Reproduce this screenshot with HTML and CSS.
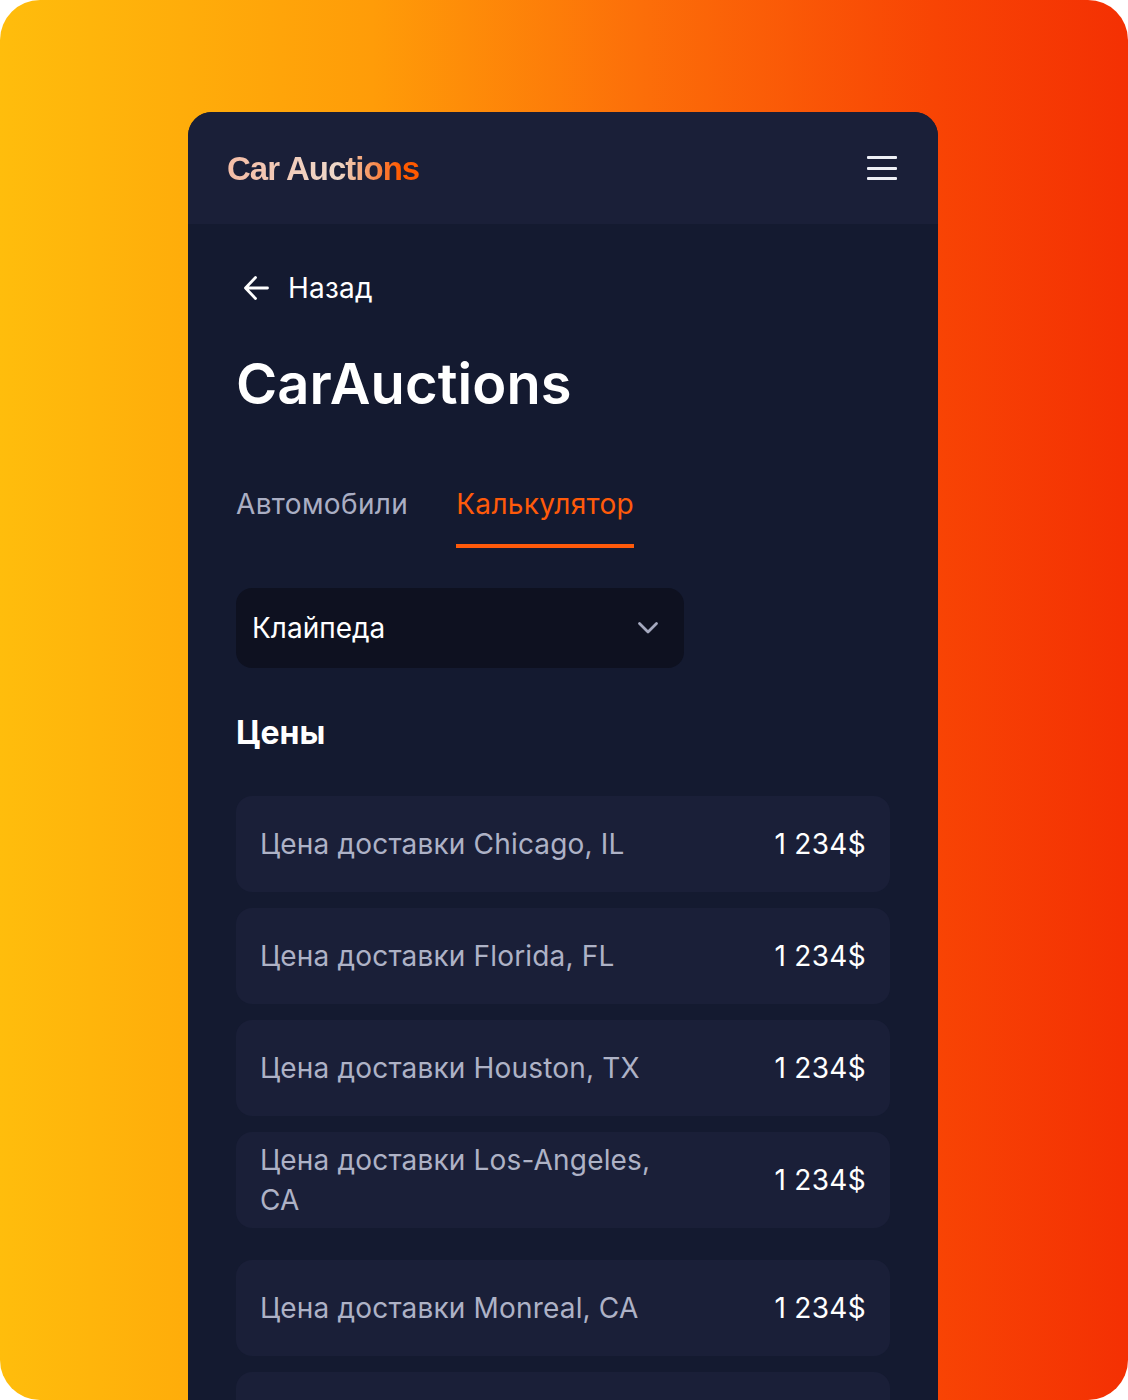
FILE: index.html
```html
<!DOCTYPE html>
<html lang="ru">
<head>
    <meta charset="UTF-8">
    <meta name="viewport" content="width=device-width, initial-scale=1.0">
    <title>Car Auctions</title>
    <link rel="stylesheet" href="styles.css">
</head>
<body>
    <div class="stage">
        <div class="phone">
            <header class="topbar">
                <span class="logo">Car Auctions</span>
                <button class="burger" aria-label="Меню">
                    <span></span>
                    <span></span>
                    <span></span>
                </button>
            </header>
            <main class="content">
                <a class="back">
                    <svg width="32" height="32" viewBox="0 0 32 32" fill="none">
                        <path d="M27.5 16H6.5M15.5 5.5L5.5 16l10 10.5" stroke="#fff" stroke-width="2.8" stroke-linecap="round" stroke-linejoin="round"/>
                    </svg>
                    <span>Назад</span>
                </a>
                <h1 class="title">CarAuctions</h1>
                <nav class="tabs">
                    <a class="tab">Автомобили</a>
                    <a class="tab tab-active">Калькулятор</a>
                </nav>
                <div class="select">
                    <span>Клайпеда</span>
                    <svg width="24" height="24" viewBox="0 0 24 24" fill="none">
                        <path d="M3.5 7.5L12 16l8.5-8.5" stroke="#a5a9bf" stroke-width="2.8" stroke-linecap="round" stroke-linejoin="round"/>
                    </svg>
                </div>
                <h2 class="subtitle">Цены</h2>
                <div class="prices">
                    <div class="price-row"><span class="price-label">Цена доставки Chicago, IL</span><span class="price-value">1 234$</span></div>
                    <div class="price-row"><span class="price-label">Цена доставки Florida, FL</span><span class="price-value">1 234$</span></div>
                    <div class="price-row"><span class="price-label">Цена доставки Houston, TX</span><span class="price-value">1 234$</span></div>
                    <div class="price-row"><span class="price-label">Цена доставки Los-Angeles, CA</span><span class="price-value">1 234$</span></div>
                    <div class="price-row price-row-spaced"><span class="price-label">Цена доставки Monreal, CA</span><span class="price-value">1 234$</span></div>
                    <div class="price-row"></div>
                </div>
            </main>
        </div>
    </div>
</body>
</html>
```

FILE: styles.css
```css
html, body {
    margin: 0;
    padding: 0;
    background: #fff;
}

body {
    font-family: "Inter", "Noto Sans", sans-serif;
    color: #fff;
}

.stage {
    width: 1128px;
    height: 1400px;
    box-sizing: border-box;
    padding: 112px 190px 0 188px;
    border-radius: 40px;
    overflow: hidden;
    background: linear-gradient(90deg, #ffbd0c 0%, #ff9c08 33%, #fc6e09 57%, #f84404 83%, #f43003 100%);
}

.phone {
    height: 1288px;
    border-radius: 24px 24px 0 0;
    overflow: hidden;
    background: #141a30;
}

.topbar {
    height: 112px;
    box-sizing: border-box;
    padding: 0 41px 0 39px;
    display: flex;
    align-items: center;
    justify-content: space-between;
    background: #1a1f38;
}

.logo {
    font-family: "Liberation Sans", sans-serif;
    font-size: 33px;
    line-height: 40px;
    font-weight: 700;
    letter-spacing: -1px;
    padding-top: 2px;
    background: linear-gradient(90deg, #f5bda6 0%, #eed8ca 58%, #ff5a00 90%);
    -webkit-background-clip: text;
    background-clip: text;
    color: transparent;
}

.burger {
    width: 30px;
    height: 24px;
    padding: 0;
    border: 0;
    background: none;
    display: flex;
    flex-direction: column;
    justify-content: space-between;
}

.burger span {
    display: block;
    height: 3px;
    border-radius: 1px;
    background: #eef0f6;
}

.content {
    padding: 48px 48px 0;
}

.back {
    display: flex;
    align-items: center;
    gap: 16px;
    height: 32px;
    padding-left: 4px;
    font-size: 28px;
    line-height: 32px;
    letter-spacing: 0.2px;
}

.title {
    margin: 48px 0 0;
    font-size: 56px;
    line-height: 64px;
    font-weight: 600;
    letter-spacing: 0.1px;
}

.tabs {
    display: flex;
    gap: 48px;
    margin-top: 48px;
}

.tab {
    display: block;
    height: 84px;
    box-sizing: border-box;
    padding-top: 20px;
    font-size: 28px;
    line-height: 40px;
    letter-spacing: 0.35px;
    color: #aaaec3;
    border-bottom: 4px solid transparent;
}

.tab-active {
    color: #ff5a0a;
    border-bottom-color: #ff5a0a;
}

.select {
    width: 448px;
    height: 80px;
    box-sizing: border-box;
    margin-top: 40px;
    padding: 0 24px 0 16px;
    display: flex;
    align-items: center;
    justify-content: space-between;
    border-radius: 16px;
    background: #0e1120;
    font-size: 28px;
}

.subtitle {
    margin: 45px 0 0;
    font-size: 32px;
    line-height: 40px;
    font-weight: 700;
}

.prices {
    margin-top: 43px;
    display: flex;
    flex-direction: column;
    gap: 16px;
}

.price-row {
    height: 96px;
    flex: none;
    box-sizing: border-box;
    padding: 0 24px;
    display: flex;
    align-items: center;
    justify-content: space-between;
    border-radius: 16px;
    background: #1a1f38;
}

.price-row-spaced {
    margin-top: 16px;
}

.price-label {
    max-width: 410px;
    font-size: 28px;
    line-height: 40px;
    letter-spacing: 0.17px;
    color: #aeb2c6;
}

.price-value {
    font-size: 28px;
    line-height: 40px;
    letter-spacing: 0.3px;
}
```
